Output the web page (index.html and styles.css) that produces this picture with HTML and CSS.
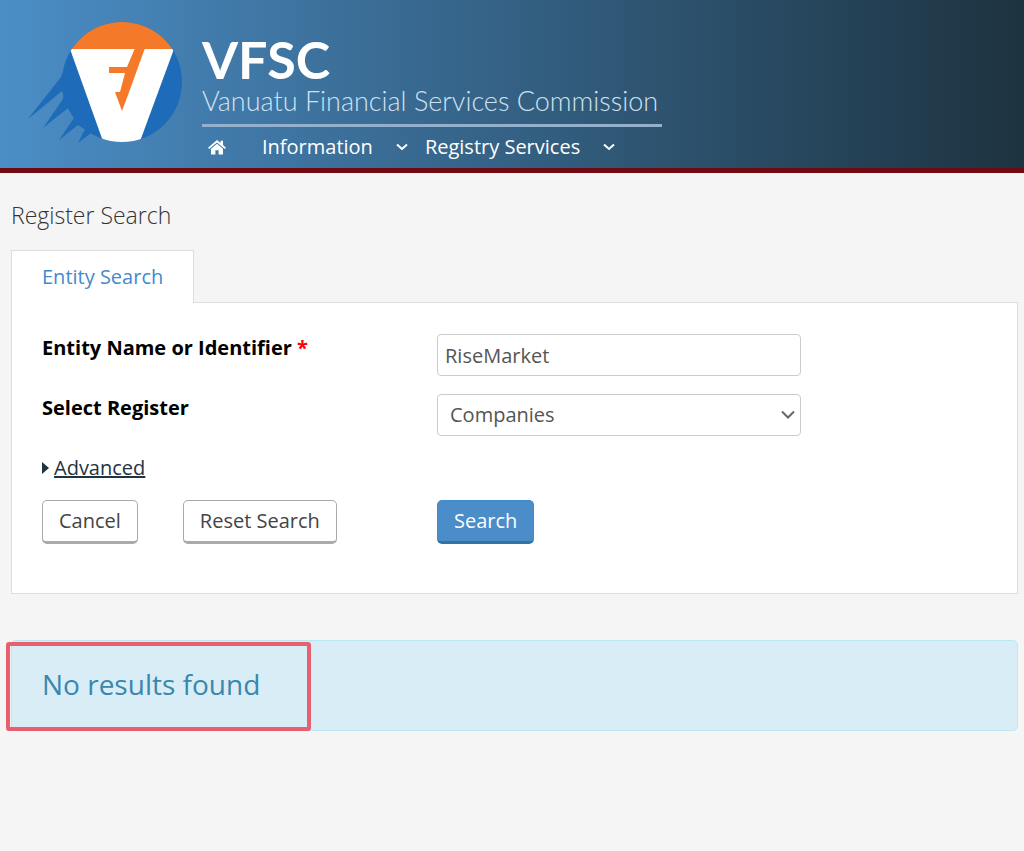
FILE: index.html
```html
<!DOCTYPE html>
<html lang="en">
<head>
<meta charset="utf-8">
<meta name="viewport" content="width=device-width, initial-scale=1">
<title>VFSC Register Search</title>
<link rel="stylesheet" href="styles.css">
</head>
<body>
<header class="site-header">
  <svg class="logo" viewBox="0 0 154 122" role="img" aria-label="VFSC logo">
    <defs><clipPath id="disc"><circle cx="94" cy="60" r="60"/></clipPath></defs>
    <path fill="#1d6bb9" d="M36 47 33 55 0 97 34 69Q36 72 35 77L15 106 40 86Q43 90 46 96L31 118 50 103Q54 106 57 107L50 121 63 111 90 119 80 50Z"/>
    <circle cx="94" cy="60" r="60" fill="#1d6bb9"/>
    <path clip-path="url(#disc)" fill="#f47a29" d="M30-2H160V28H30Z"/>
    <path clip-path="url(#disc)" fill="#fff" d="M42 27H146L111 122H76Z"/>
    <path fill="#f47a29" d="M107 26H117L100 73 94 89 87 70H92L97 51H81V45H99Z"/>
  </svg>
  <div class="masthead">
    <div class="brand">VFSC</div>
    <div class="tagline">Vanuatu Financial Services Commission</div>
    <nav class="main-nav" aria-label="Main">
      <a class="home" href="#" aria-label="Home">
        <svg width="18" height="15" viewBox="0 0 18 15" fill="currentColor"><path d="M9 0 0 7.7 1.2 9 9 2.4 16.8 9 18 7.7 15 5.1V.8H12.5V3ZM3 8.7 9 3.7 15 8.7V14.4H10.6V10.2H7.4V14.4H3Z"/></svg>
      </a>
      <a class="nav-item" href="#">Information
        <svg width="12" height="8" viewBox="0 0 12 8"><path d="M1 1.5 6 6 11 1.5" fill="none" stroke="currentColor" stroke-width="2"/></svg>
      </a>
      <a class="nav-item" href="#">Registry Services
        <svg width="12" height="8" viewBox="0 0 12 8"><path d="M1 1.5 6 6 11 1.5" fill="none" stroke="currentColor" stroke-width="2"/></svg>
      </a>
    </nav>
  </div>
</header>
<main class="content">
  <h1 class="title">Register Search</h1>
  <div class="tabs"><a class="tab" href="#search">Entity Search</a></div>
  <form class="panel" id="search">
    <div class="field">
      <label for="entity">Entity Name or Identifier <span class="required">*</span></label>
      <input class="control" id="entity" type="text" value="RiseMarket">
    </div>
    <div class="field">
      <label for="register">Select Register</label>
      <div class="select-wrap">
        <select class="control select" id="register"><option>Companies</option></select>
        <svg class="arrow" width="14" height="10" viewBox="0 0 14 10"><path d="M1 1.5 7 7.5 13 1.5" fill="none" stroke="#666" stroke-width="2"/></svg>
      </div>
    </div>
    <div class="advanced">
      <svg width="7" height="12" viewBox="0 0 7 12"><path d="M0 0 7 6 0 12Z" fill="#1f3440"/></svg>
      <a href="#">Advanced</a>
    </div>
    <div class="actions">
      <div class="secondary">
        <button class="btn" type="button">Cancel</button>
        <button class="btn" type="reset">Reset Search</button>
      </div>
      <button class="btn primary" type="button">Search</button>
    </div>
  </form>
  <div class="alert" role="status">
    No results found
    <span class="highlight"></span>
  </div>
</main>
</body>
</html>
```
FILE: styles.css
```css
* { box-sizing: border-box; }
body {
  margin: 0;
  background: #f5f5f5;
  color: #333;
  font: 20px/28px "Open Sans", sans-serif;
}
svg { display: block; flex: none; }
.site-header {
  display: flex;
  align-items: flex-start;
  gap: 20px;
  padding: 22px 28px 7px;
  border-bottom: 5px solid #700a10;
  background: linear-gradient(90deg, #4b8ec7, #1d3340);
}
.logo { width: 154px; height: 122px; }
.masthead { color: #fff; padding-top: 9px; min-width: 460px; }
.brand { font: 700 52px/56px Lato, sans-serif; }
.tagline {
  padding-bottom: 9px;
  border-bottom: 3px solid #93b0cd;
  color: #cfe2f3;
  font: 300 27px/28px Lato, sans-serif;
}
.main-nav { display: flex; align-items: center; padding: 6px 0 0 6px; }
.main-nav a { color: #fff; text-decoration: none; }
.home { margin-right: 36px; }
.nav-item { display: flex; align-items: center; gap: 23px; margin-right: 17px; white-space: nowrap; }
.content { padding: 28px 6px 28px 11px; }
.title { margin: 0 0 21px; font-size: 23px; line-height: 28px; font-weight: 300; }
.tabs { display: flex; }
.tab {
  position: relative;
  z-index: 1;
  margin-bottom: -1px;
  padding: 12px 30px;
  border: 1px solid #ddd;
  border-bottom: 0;
  background: #fff;
  color: #428bca;
  text-decoration: none;
}
.panel { padding: 31px 30px 49px; border: 1px solid #ddd; background: #fff; }
.field, .actions {
  display: grid;
  grid-template-columns: 395px minmax(0, 364px);
}
.field { margin-bottom: 18px; }
.field label { color: #000; font-weight: 700; }
.required { color: #f00; }
.control {
  width: 100%;
  height: 42px;
  padding: 0 7px;
  border: 1px solid #ccc;
  border-radius: 4px;
  background: #fff;
  color: #555;
  font: inherit;
}
.select-wrap { position: relative; }
.select { appearance: none; padding-left: 12px; }
.arrow { position: absolute; right: 6px; top: 16px; pointer-events: none; }
.advanced { display: flex; align-items: center; gap: 5px; margin-bottom: 18px; }
.advanced a { color: #1f3440; }
.secondary { display: flex; gap: 45px; }
.btn {
  justify-self: start;
  height: 44px;
  padding: 0 16px;
  border: 1px solid #aaa;
  border-bottom-width: 3px;
  border-radius: 5px;
  background: #fff;
  color: #444;
  font: inherit;
}
.primary { border-color: #428bca #428bca #3572a5; background: #4a8dc8; color: #fff; }
.alert {
  position: relative;
  margin-top: 46px;
  padding: 25px 30px 27px;
  border: 1px solid #bce8f1;
  border-radius: 5px;
  background: #d9edf7;
  color: #3a87ad;
  font-size: 28px;
  line-height: 37px;
}
.highlight {
  position: absolute;
  left: -6px;
  top: 1px;
  bottom: -1px;
  width: 305px;
  border: 4px solid #e8606f;
  border-radius: 3px;
}
```
